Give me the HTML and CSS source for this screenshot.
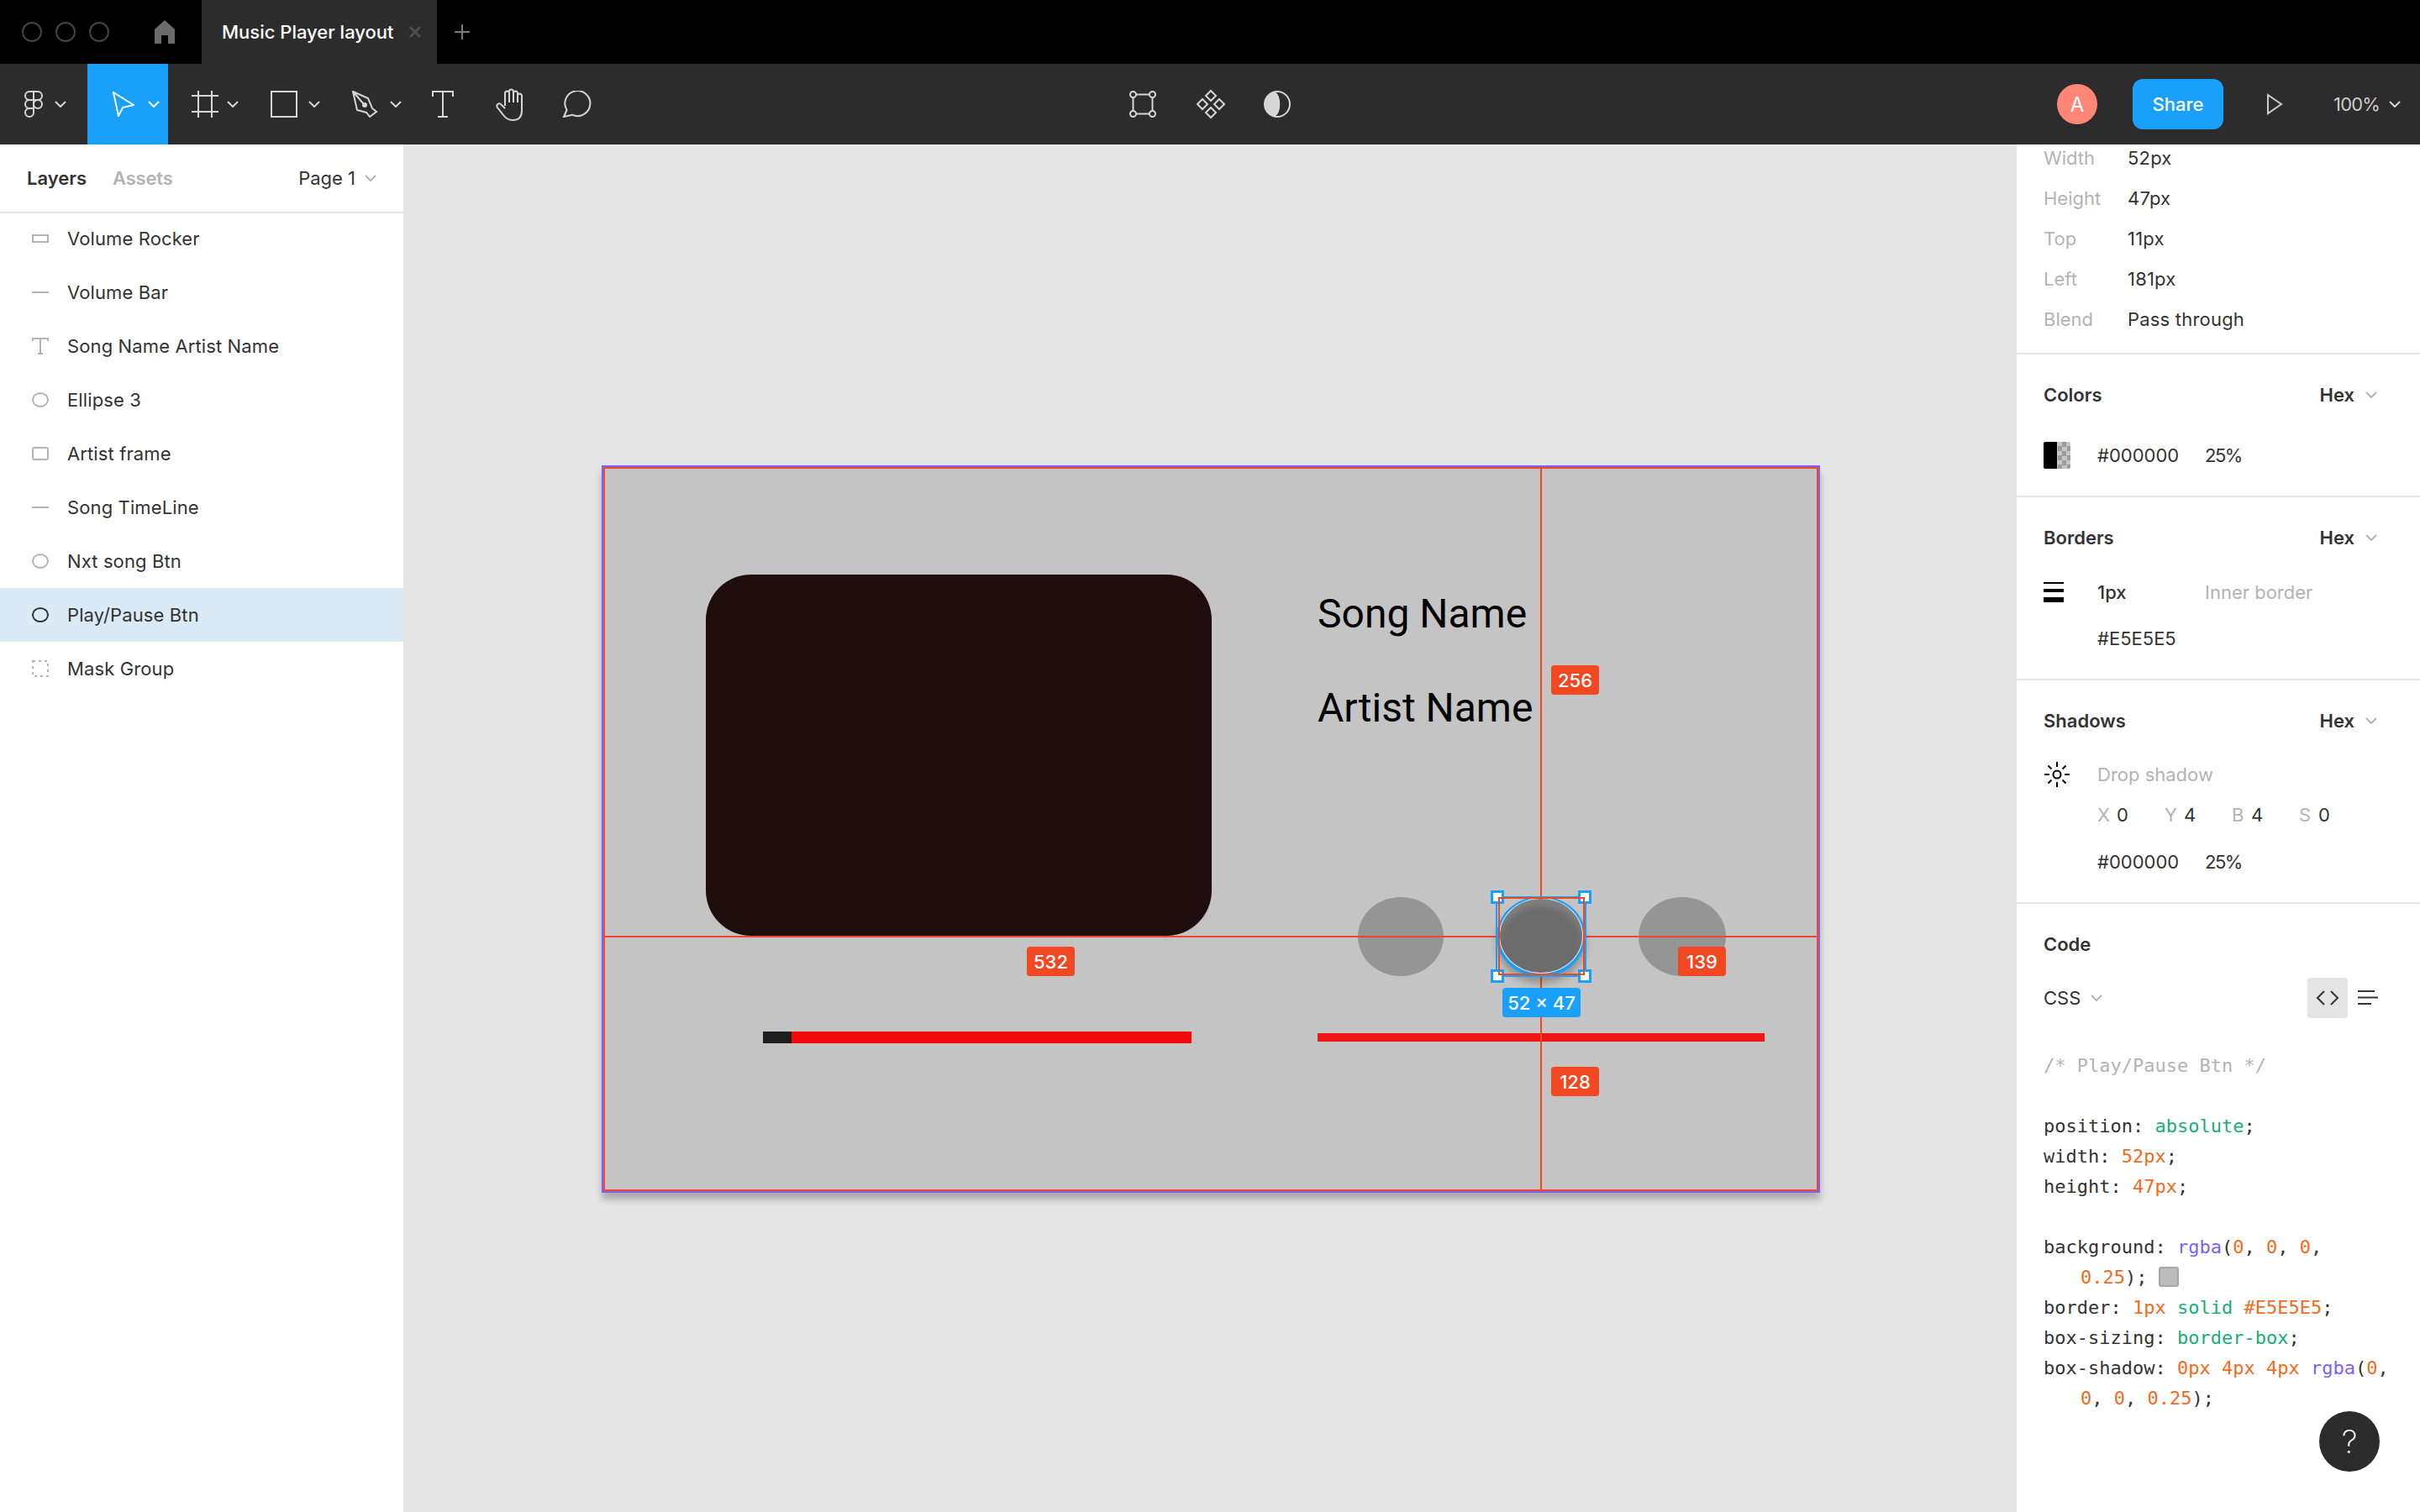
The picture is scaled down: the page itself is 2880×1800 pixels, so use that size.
FILE: index.html
```html
<!DOCTYPE html>
<html>
<head>
<meta charset="UTF-8">
<title>Music Player layout</title>
<link rel="stylesheet" href="styles.css">
</head>
<body>

<div class="tabbar">
  <div class="lights"><span></span><span></span><span></span></div>
  <svg class="home" width="24" height="28" viewBox="0 0 24 28"><path d="M12 0L24 11V28H16V18H8V28H0V11Z" fill="#6b6b6b"/></svg>
  <div class="tab">
    <span class="tab-name">Music Player layout</span>
    <svg class="tab-x" width="16" height="14" viewBox="0 0 16 14"><path d="M2 1L14 13M14 1L2 13" stroke="#4d4d4d" stroke-width="3" fill="none"/></svg>
  </div>
  <svg class="tab-plus" width="20" height="20" viewBox="0 0 20 20"><path d="M10 1V19M1 10H19" stroke="#7a7a7a" stroke-width="2" fill="none"/></svg>
</div>

<div class="toolbar">
  <div class="tools">
    <div class="tool tool-logo">
      <svg width="24" height="32" viewBox="0 0 24 32" class="ico"><path d="M12 1H7a5 5 0 0 0 0 10h5zM12 1h5a5 5 0 0 1 0 10h-5zM12 11H7a5 5 0 0 0 0 10h5zM12 21H7a5 5 0 1 0 5 5z"/><circle cx="17" cy="16" r="5"/></svg>
      <svg width="14" height="8" viewBox="0 0 14 8" class="chev"><path d="M1 1L7 7L13 1"/></svg>
    </div>
    <div class="tool tool-move">
      <svg width="26" height="30" viewBox="0 0 26 30" class="ico ico-white"><path d="M1 1L25 16L12 19L7 29Z"/></svg>
      <svg width="14" height="8" viewBox="0 0 14 8" class="chev chev-white"><path d="M1 1L7 7L13 1"/></svg>
    </div>
    <div class="tool tool-frame">
      <svg width="32" height="32" viewBox="0 0 32 32" class="ico"><path d="M8 0V32M24 0V32M0 6H32M0 25H32"/></svg>
      <svg width="14" height="8" viewBox="0 0 14 8" class="chev"><path d="M1 1L7 7L13 1"/></svg>
    </div>
    <div class="tool tool-rect">
      <svg width="32" height="32" viewBox="0 0 32 32" class="ico"><rect x="1" y="1" width="30" height="30"/></svg>
      <svg width="14" height="8" viewBox="0 0 14 8" class="chev"><path d="M1 1L7 7L13 1"/></svg>
    </div>
    <div class="tool tool-pen">
      <svg width="32" height="32" viewBox="0 0 32 32" class="ico"><path d="M2 1L20 9L25 21L30 25L22 31L18 26L7 23ZM2 1L15 16"/><circle cx="16" cy="17" r="2" fill="#d6d6d6"/></svg>
      <svg width="14" height="8" viewBox="0 0 14 8" class="chev"><path d="M1 1L7 7L13 1"/></svg>
    </div>
    <div class="tool tool-text">
      <svg width="26" height="32" viewBox="0 0 26 32" class="ico"><path d="M1 7V1H25V7M13 1V31M7 31H19"/></svg>
    </div>
    <div class="tool tool-hand">
      <svg width="36" height="40" viewBox="0 0 36 40" class="ico"><path d="M11 22V7a2.5 2.5 0 0 1 5 0V18M16 5a2.5 2.5 0 0 1 5 0V18M21 7a2.5 2.5 0 0 1 5 0V18M26 10a2.5 2.5 0 0 1 5 0V28c0 7-4 11-11 11c-5 0-8-2-11-6L2 24c-2-3 1-6 4-4l5 5"/></svg>
    </div>
    <div class="tool tool-comment">
      <svg width="36" height="32" viewBox="0 0 36 32" class="ico"><path d="M2 31L5.6 23A15 15 0 1 1 12 28.7Z"/></svg>
    </div>
  </div>

  <div class="center-tools">
    <svg width="32" height="32" viewBox="0 0 32 32" class="ico"><path d="M4.5 8V24M8 4.5H24M27.5 8V24M8 27.500H24"/><circle cx="4.5" cy="4.5" r="3.5"/><circle cx="27.5" cy="4.5" r="3.5"/><circle cx="4.5" cy="27.5" r="3.5"/><circle cx="27.5" cy="27.5" r="3.5"/></svg>
    <svg class="comp-ic" width="36" height="36" viewBox="0 0 36 36"><path d="M18 2L24 8L18 14L12 8ZM8 12L14 18L8 24L2 18ZM28 12L34 18L28 24L22 18ZM18 22L24 28L18 34L12 28Z"/></svg>
    <svg width="32" height="32" viewBox="0 0 32 32" class="ico"><circle cx="16" cy="16" r="15"/><path d="M13 2C20 7 20 25 13 30A14.5 14.5 0 0 1 13 2Z" fill="#d6d6d6"/></svg>
  </div>

  <div class="right-tools">
    <div class="avatar">A</div>
    <div class="share">Share</div>
    <svg class="play" width="20" height="26" viewBox="0 0 20 26"><path d="M2 2L18 13L2 24Z"/></svg>
    <span class="zoom-val">100%</span>
    <svg width="14" height="8" viewBox="0 0 14 8" class="chev"><path d="M1 1L7 7L13 1"/></svg>
  </div>
</div>

<div class="main">
  <div class="left-panel">
    <div class="panel-head">
      <span class="tab-active">Layers</span>
      <span class="tab-off">Assets</span>
      <span class="page">Page 1</span>
      <svg width="14" height="8" viewBox="0 0 14 8" class="chev chev-light"><path d="M1 1L7 7L13 1"/></svg>
    </div>
    <div class="layer"><span class="lic"><svg width="20" height="20" viewBox="0 0 20 20"><rect x="1" y="6" width="18" height="8"/></svg></span>Volume Rocker</div>
    <div class="layer"><span class="lic"><svg width="20" height="20" viewBox="0 0 20 20"><path d="M0 10H20"/></svg></span>Volume Bar</div>
    <div class="layer"><span class="lic"><svg width="20" height="20" viewBox="0 0 20 20"><path d="M1 4V1H19V4M10 1V19M7 19H13"/></svg></span>Song Name Artist Name</div>
    <div class="layer"><span class="lic"><svg width="20" height="20" viewBox="0 0 20 20"><ellipse cx="10" cy="10" rx="9" ry="8"/></svg></span>Ellipse 3</div>
    <div class="layer"><span class="lic"><svg width="20" height="20" viewBox="0 0 20 20"><rect x="1" y="3" width="18" height="14" rx="2"/></svg></span>Artist frame</div>
    <div class="layer"><span class="lic"><svg width="20" height="20" viewBox="0 0 20 20"><path d="M0 10H20"/></svg></span>Song TimeLine</div>
    <div class="layer"><span class="lic"><svg width="20" height="20" viewBox="0 0 20 20"><ellipse cx="10" cy="10" rx="9" ry="8"/></svg></span>Nxt song Btn</div>
    <div class="layer layer-on"><span class="lic"><svg width="20" height="20" viewBox="0 0 20 20"><ellipse cx="10" cy="10" rx="9" ry="8"/></svg></span>Play/Pause Btn</div>
    <div class="layer"><span class="lic"><svg width="20" height="20" viewBox="0 0 20 20"><rect x="1" y="1" width="18" height="18" stroke-dasharray="3 4"/></svg></span>Mask Group</div>
  </div>

  <div class="canvas">
    <div class="frame">
      <div class="cover"></div>
      <div class="song song-name">Song Name</div>
      <div class="song artist-name">Artist Name</div>
      <div class="btn btn-prev"></div>
      <div class="btn btn-next"></div>
      <div class="bar-left"><span class="bar-black"></span></div>
      <div class="bar-right"></div>
      <div class="guide guide-h"></div>
      <div class="guide guide-v"></div>
      <div class="sel-ring"></div>
      <div class="btn-play"></div>
      <div class="sel-box"></div>
      <div class="handle h-tl"></div>
      <div class="handle h-tr"></div>
      <div class="handle h-bl"></div>
      <div class="handle h-br"></div>
      <div class="sel-red"></div>
      <div class="size-tag">52 × 47</div>
      <div class="dist d-532">532</div>
      <div class="dist d-139">139</div>
      <div class="dist d-256">256</div>
      <div class="dist d-128">128</div>
    </div>
  </div>

  <div class="right-panel">
    <div class="sec sec-props">
      <div class="prop"><span class="prop-k">Width</span><span class="prop-v">52px</span></div>
      <div class="prop"><span class="prop-k">Height</span><span class="prop-v">47px</span></div>
      <div class="prop"><span class="prop-k">Top</span><span class="prop-v">11px</span></div>
      <div class="prop"><span class="prop-k">Left</span><span class="prop-v">181px</span></div>
      <div class="prop"><span class="prop-k">Blend</span><span class="prop-v">Pass through</span></div>
    </div>

    <div class="sec">
      <div class="sec-title"><span>Colors</span><span class="hex">Hex</span><svg width="14" height="8" viewBox="0 0 14 8" class="chev chev-light"><path d="M1 1L7 7L13 1"/></svg></div>
      <div class="vals vals-colors">
        <span class="swatch"></span><span class="v1">#000000</span><span class="v2 pct">25%</span>
      </div>
    </div>

    <div class="sec">
      <div class="sec-title"><span>Borders</span><span class="hex">Hex</span><svg width="14" height="8" viewBox="0 0 14 8" class="chev chev-light"><path d="M1 1L7 7L13 1"/></svg></div>
      <div class="vals vals-border">
        <span class="border-ic"><i class="l1"></i><i class="l2"></i><i class="l3"></i></span><span class="v1 v-med">1px</span><span class="v2 muted">Inner border</span>
      </div>
      <div class="vals vals-border2"><span class="v1 indent">#E5E5E5</span></div>
    </div>

    <div class="sec">
      <div class="sec-title"><span>Shadows</span><span class="hex">Hex</span><svg width="14" height="8" viewBox="0 0 14 8" class="chev chev-light"><path d="M1 1L7 7L13 1"/></svg></div>
      <div class="vals vals-shadow">
        <svg class="sun" width="32" height="32" viewBox="0 0 32 32"><circle cx="16" cy="16" r="4.5"/><path d="M16 1V7M16 25V31M1 16H7M25 16H31M5.5 5.5L9.5 9.5M22.5 22.5L26.5 26.5M26.5 5.5L22.5 9.5M9.5 22.5L5.5 26.5"/></svg>
        <span class="muted">Drop shadow</span>
      </div>
      <div class="xybs">
        <span><b>X</b>0</span><span><b>Y</b>4</span><span><b>B</b>4</span><span><b>S</b>0</span>
      </div>
      <div class="vals vals-shadow2"><span class="v1 indent">#000000</span><span class="v2 pct">25%</span></div>
    </div>

    <div class="sec sec-code">
      <div class="sec-title"><span>Code</span></div>
      <div class="code-head">
        <span class="lang">CSS</span>
        <svg width="14" height="8" viewBox="0 0 14 8" class="chev chev-light"><path d="M1 1L7 7L13 1"/></svg>
        <span class="code-toggle"><svg width="28" height="20" viewBox="0 0 28 20"><path d="M10 2L2 10L10 18M18 2L26 10L18 18"/></svg></span>
        <svg class="code-lines" width="24" height="18" viewBox="0 0 24 18"><path d="M0 1H20M0 8.500H24M0 16H16"/></svg>
      </div>
      <div class="code">
        <div class="cm">/* Play/Pause Btn */</div>
        <div>&nbsp;</div>
        <div>position: <span class="g">absolute</span>;</div>
        <div>width: <span class="o">52px</span>;</div>
        <div>height: <span class="o">47px</span>;</div>
        <div>&nbsp;</div>
        <div>background: <span class="p">rgba</span>(<span class="o">0</span>, <span class="o">0</span>, <span class="o">0</span>,</div>
        <div class="wrap"><span class="o">0.25</span>); <span class="code-chip"></span></div>
        <div>border: <span class="o">1px</span> <span class="g">solid</span> <span class="o">#E5E5E5</span>;</div>
        <div>box-sizing: <span class="g">border-box</span>;</div>
        <div>box-shadow: <span class="o">0px</span> <span class="o">4px</span> <span class="o">4px</span> <span class="p">rgba</span>(<span class="o">0</span>,</div>
        <div class="wrap"><span class="o">0</span>, <span class="o">0</span>, <span class="o">0.25</span>);</div>
      </div>
    </div>

    <div class="help">?</div>
  </div>
</div>

</body>
</html>
```

FILE: styles.css
```css
* { box-sizing: border-box; }

html, body {
  margin: 0;
  height: 100%;
  overflow: hidden;
}

body {
  font-family: Inter, "Noto Sans", sans-serif;
  font-size: 22px;
  color: #333;
  background: #fff;
  display: flex;
  flex-direction: column;
}

/* top tabs */
.tabbar {
  height: 76px;
  background: #000;
  display: flex;
  align-items: center;
  flex: none;
}
.lights {
  display: flex;
  gap: 16px;
  margin-left: 26px;
}
.lights span {
  width: 24px;
  height: 24px;
  border-radius: 50%;
  border: 2px solid #444;
}
.home { margin-left: 54px; margin-top: 0; }
.tab {
  margin-left: 32px;
  width: 280px;
  height: 76px;
  background: #2c2c2c;
  display: flex;
  align-items: center;
  padding-left: 24px;
}
.tab-name {
  color: #fff;
  font-weight: 500;
  font-size: 22px;
  width: 222px;
  white-space: nowrap;
}
.tab-plus { margin-left: 20px; }

/* toolbar */
.toolbar {
  height: 96px;
  background: #2c2c2c;
  display: flex;
  align-items: center;
  position: relative;
  flex: none;
}
.tools {
  display: flex;
  align-items: center;
  height: 96px;
}
.tool {
  height: 96px;
  display: flex;
  align-items: center;
  flex: none;
}
.ico { fill: none; stroke: #d6d6d6; stroke-width: 2; display: block; }
.ico-white { stroke: #fff; }
.chev { fill: none; stroke: #d6d6d6; stroke-width: 2; flex: none; display: block; }
.chev-white { stroke: #fff; }
.chev-light { stroke: #b3b3b3; }

.tool-logo { width: 104px; padding-left: 28px; gap: 13px; }
.tool-move { width: 96px; background: #18a0fb; padding-left: 30px; gap: 16px; }
.tool-frame { width: 122px; padding-left: 28px; gap: 10px; }
.tool-rect { width: 96px; gap: 13px; }
.tool-pen { width: 96px; gap: 14px; }
.tool-text { width: 76px; }
.tool-hand { width: 79px; }

.center-tools {
  position: absolute;
  left: 1344px;
  top: 30px;
  display: flex;
  align-items: center;
  gap: 46px;
}
.comp-ic {
  display: block;
  fill: none;
  stroke: #d6d6d6;
  stroke-width: 2;
  margin-left: 1px;
  margin-right: -1px;
}

.right-tools {
  margin-left: auto;
  display: flex;
  align-items: center;
  padding-right: 23px;
}
.avatar {
  width: 48px;
  height: 48px;
  border-radius: 50%;
  background: #ff8577;
  color: #fff;
  font-size: 24px;
  display: flex;
  align-items: center;
  justify-content: center;
}
.share {
  margin-left: 42px;
  width: 108px;
  height: 60px;
  border-radius: 12px;
  background: #18a0fb;
  color: #fff;
  font-weight: 500;
  font-size: 22px;
  display: flex;
  align-items: center;
  justify-content: center;
}
.play {
  margin-left: 51px;
  fill: none;
  stroke: #ccc;
  stroke-width: 2;
}
.zoom-val {
  margin-left: 60px;
  width: 53px;
  color: #ccc;
  font-size: 22px;
  letter-spacing: -0.8px;
  margin-right: 13px;
  white-space: nowrap;
}

/* main area */
.main {
  flex: 1;
  display: flex;
  min-height: 0;
}

.left-panel {
  width: 480px;
  flex: none;
  background: #fff;
}
.panel-head {
  height: 80px;
  display: flex;
  align-items: center;
  padding: 0 32px;
  box-shadow: 0 2px 0 #e5e5e5;
  font-size: 22px;
}
.tab-active { font-weight: 600; color: #333; }
.tab-off { font-weight: 600; color: #b3b3b3; margin-left: 31px; letter-spacing: -0.2px; }
.page { margin-left: auto; margin-right: 11px; }

.layer {
  height: 64px;
  display: flex;
  align-items: center;
  padding-left: 38px;
  color: #333;
  white-space: nowrap;
  letter-spacing: 0.12px;
}
.lic { width: 42px; flex: none; display: flex; }
.lic svg { fill: none; stroke: #b3b3b3; stroke-width: 2; }
.layer-on { background: #daebf7; }
.layer-on .lic svg { stroke: #333; }

/* canvas */
.canvas {
  flex: 1;
  background: #e5e5e5;
  position: relative;
  overflow: hidden;
}
.frame {
  position: absolute;
  left: 236px;
  top: 382px;
  width: 1450px;
  height: 866px;
  background: #c4c4c4;
  border: 2px solid #7b61ff;
  box-shadow: inset 0 0 0 2px #f24822, 0 8px 8px rgba(0, 0, 0, 0.25);
}
.cover {
  position: absolute;
  left: 122px;
  top: 128px;
  width: 602px;
  height: 430px;
  border-radius: 54px;
  background: #200e0e;
}
.song {
  position: absolute;
  left: 850px;
  font-family: Roboto, sans-serif;
  font-size: 48px;
  line-height: 60px;
  color: #000;
  white-space: nowrap;
}
.song-name { top: 145px; }
.artist-name { top: 257px; }

.btn {
  position: absolute;
  top: 512px;
  height: 94px;
  border-radius: 50%;
  background: #959595;
}
.btn-prev { left: 898px; width: 102px; }
.btn-next { left: 1232px; width: 104px; }

.bar-left {
  position: absolute;
  left: 190px;
  top: 672px;
  width: 510px;
  height: 14px;
  background: #f00a0a;
}
.bar-black {
  display: block;
  width: 34px;
  height: 14px;
  background: #1e1e1c;
}
.bar-right {
  position: absolute;
  left: 850px;
  top: 674px;
  width: 532px;
  height: 10px;
  background: #ee1616;
}

.guide { position: absolute; background: #f24822; }
.guide-h { left: 0; right: 0; top: 558px; height: 2px; }
.guide-v { top: 0; bottom: 0; left: 1115px; width: 2px; }

.sel-ring {
  position: absolute;
  left: 1063px;
  top: 511px;
  width: 106px;
  height: 96px;
  border-radius: 50%;
  background: #18a0fb;
  box-shadow: 0 8px 8px rgba(0, 0, 0, 0.25);
}
.btn-play {
  position: absolute;
  left: 1066px;
  top: 513px;
  width: 100px;
  height: 90px;
  border-radius: 50%;
  background: #6c6c6c;
  border: 1px solid #e5e5e5;
  box-shadow: inset 0 10px 8px -2px rgba(255, 255, 255, 0.16);
}
.sel-box {
  position: absolute;
  left: 1062px;
  top: 511px;
  width: 108px;
  height: 96px;
  border: 2px solid #18a0fb;
}
.handle {
  position: absolute;
  width: 16px;
  height: 16px;
  background: #fff;
  border: 3px solid #18a0fb;
}
.h-tl { left: 1056px; top: 504px; }
.h-tr { left: 1160px; top: 504px; }
.h-bl { left: 1056px; top: 598px; }
.h-br { left: 1160px; top: 598px; }
.sel-red {
  position: absolute;
  left: 1065px;
  top: 512px;
  width: 103px;
  height: 93px;
  border: 2px solid #f24822;
}
.size-tag {
  position: absolute;
  left: 1070px;
  top: 620px;
  width: 93px;
  height: 35px;
  border-radius: 4px;
  background: #18a0fb;
  color: #fff;
  font-size: 22px;
  font-weight: 500;
  display: flex;
  align-items: center;
  justify-content: center;
  white-space: nowrap;
}
.dist {
  position: absolute;
  height: 35px;
  width: 57px;
  border-radius: 4px;
  background: #f24822;
  color: #fff;
  font-size: 22px;
  font-weight: 500;
  display: flex;
  align-items: center;
  justify-content: center;
}
.d-532 { left: 504px; top: 571px; }
.d-139 { left: 1279px; top: 571px; }
.d-256 { left: 1128px; top: 236px; }
.d-128 { left: 1128px; top: 714px; }

/* inspect panel */
.right-panel {
  width: 480px;
  flex: none;
  background: #fff;
  position: relative;
  overflow: hidden;
}
.sec {
  padding: 32px 32px 32px;
  border-bottom: 2px solid #e5e5e5;
}
.sec-props {
  margin-top: -8px;
  padding-top: 0;
  padding-bottom: 16px;
}
.prop {
  height: 48px;
  display: flex;
  align-items: center;
}
.prop-k { width: 100px; color: #b3b3b3; }
.prop-v { color: #333; letter-spacing: 0.2px; }

.sec-title {
  height: 32px;
  display: flex;
  align-items: center;
  font-weight: 600;
  color: #333;
}
.hex { margin-left: auto; margin-right: 13px; }
.sec-title .chev { margin-right: 19px; }

.vals {
  height: 32px;
  display: flex;
  align-items: center;
}
.vals-colors { margin-top: 40px; }
.vals-border { margin-top: 33px; }
.vals-border2 { margin-top: 23px; }
.vals-shadow { margin-top: 32px; }
.vals-shadow2 { margin-top: 24px; }
.v1 { width: 128px; margin-left: 0; flex: none; }
.v2 { flex: none; }
.pct { letter-spacing: -1.5px; }
.indent { margin-left: 64px; }
.muted { color: #b3b3b3; }
.v-med { font-weight: 500; }

.swatch {
  width: 32px;
  height: 32px;
  margin-right: 32px;
  border-radius: 2px;
  background:
    linear-gradient(90deg, #000 50%, transparent 50%),
    repeating-conic-gradient(#c6c6c6 0 25%, #9c9c9c 0 50%) 0 0 / 11px 11px;
  flex: none;
}
.border-ic {
  width: 24px;
  margin-right: 40px;
  flex: none;
}
.border-ic i { display: block; background: #000; }
.border-ic .l1 { height: 2px; }
.border-ic .l2 { height: 4px; margin-top: 6px; }
.border-ic .l3 { height: 6px; margin-top: 6px; }

.sun { margin-right: 32px; flex: none; fill: none; stroke: #000; stroke-width: 2; }

.xybs {
  margin-top: 16px;
  margin-left: 64px;
  height: 32px;
  display: flex;
  align-items: center;
}
.xybs span { width: 80px; flex: none; display: flex; color: #333; }
.xybs b { font-weight: 400; color: #b3b3b3; width: 23px; }

.sec-code { border-bottom: 0; }
.code-head {
  margin-top: 24px;
  height: 48px;
  display: flex;
  align-items: center;
}
.lang { margin-right: 12px; }
.code-toggle {
  margin-left: auto;
  width: 48px;
  height: 48px;
  background: #e5e5e5;
  border-radius: 4px;
  display: flex;
  align-items: center;
  justify-content: center;
}
.code-toggle svg, .code-lines { fill: none; stroke: #333; stroke-width: 2; }
.code-lines { margin-left: 12px; margin-right: 18px; }

.code {
  margin-top: 39px;
  font-family: "DejaVu Sans Mono", monospace;
  font-size: 22px;
  line-height: 36px;
  color: #333;
  white-space: nowrap;
}
.code .cm { color: #b3b3b3; }
.code .g { color: #1bac7a; }
.code .o { color: #f26b1d; }
.code .p { color: #7b61ff; }
.code .wrap { padding-left: 44px; }
.code-chip {
  display: inline-block;
  width: 24px;
  height: 24px;
  border-radius: 3px;
  background: #bcbcbc;
  border: 2px solid #a6a6a6;
  vertical-align: -4px;
}

.help {
  position: absolute;
  right: 48px;
  bottom: 48px;
  width: 72px;
  height: 72px;
  border-radius: 50%;
  background: #2c2c2c;
  color: #fff;
  font-weight: 200;
  font-size: 38px;
  display: flex;
  align-items: center;
  justify-content: center;
}
```
